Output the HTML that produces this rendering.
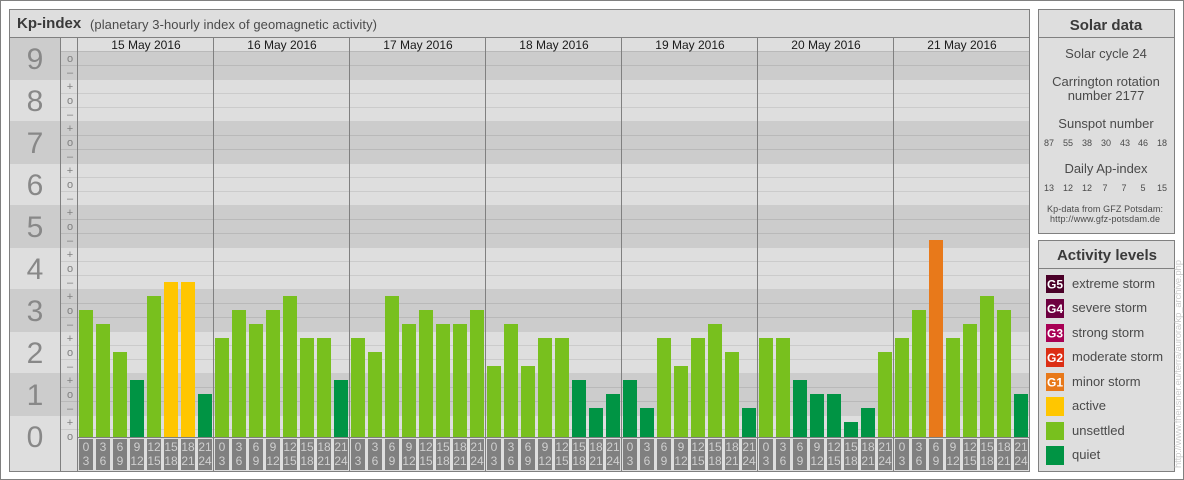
<!DOCTYPE html>
<html lang="en">
<head>
<meta charset="utf-8">
<title>Kp-index</title>
<style>
html,body{margin:0;padding:0;background:#fff}
svg{display:block;font-family:"Liberation Sans",Arial,sans-serif}
text{text-anchor:middle}
.s{text-anchor:start}
.k{font-size:30px;fill:#888888}
.m{font-size:11px;fill:#808080}
.d{font-size:12px;fill:#1a1a1a}
.c{font-size:12px;fill:#cfcfcf}
.t{font-size:13px;fill:#4a4a4a}
.n{font-size:9px;fill:#4a4a4a}
.h{font-size:15px;font-weight:bold;fill:#3a3a3a}
.g{font-size:12px;font-weight:bold;fill:#fff}
</style>
</head>
<body>
<svg xmlns="http://www.w3.org/2000/svg" width="1184" height="480" viewBox="0 0 1184 480">
<g shape-rendering="crispEdges">
<rect x="0.5" y="0.5" width="1183" height="479" fill="#fff" stroke="#808080"/>
<rect x="9.5" y="9.5" width="1020" height="462" fill="#dedede" stroke="#808080"/>
<rect x="1038.5" y="9.5" width="136" height="224" fill="#dedede" stroke="#808080"/>
<rect x="1038.5" y="240.5" width="136" height="231" fill="#dedede" stroke="#808080"/>
<path fill="#808080" d="M10 37h1019v1H10zM1039 37h135v1h-135zM1039 268h135v1h-135z"/>
<path fill="#cccccc" d="M10 38h50v42H10zM60 52h969v28H60zM10 121h1019v43H10zM10 205h1019v43H10zM10 289h1019v43H10zM10 373h1019v43H10z"/>
<path fill="#b9b9b9" d="M61 51h968v1H61zM61 65h968v1H61zM61 135h968v1H61zM61 149h968v1H61zM61 219h968v1H61zM61 233h968v1H61zM61 303h968v1H61zM61 317h968v1H61zM61 387h968v1H61zM61 401h968v1H61z"/>
<path fill="#cbcbcb" d="M61 93h968v1H61zM61 107h968v1H61zM61 177h968v1H61zM61 191h968v1H61zM61 261h968v1H61zM61 275h968v1H61zM61 345h968v1H61zM61 359h968v1H61zM61 429h968v1H61z"/>
<rect x="78" y="438" width="951" height="33" fill="#dedede"/>
<path fill="#808080" d="M60 38h1v433h-1zM77 38h1v433h-1zM213 38h1v433h-1zM349 38h1v433h-1zM485 38h1v433h-1zM621 38h1v433h-1zM757 38h1v433h-1zM893 38h1v433h-1zM78 437h951v1H78z"/>
<path fill="#78c01e" d="M79 310h14v127H79zM96 324h14v113H96zM113 352h14v85h-14zM147 296h14v141h-14zM215 338h14v99h-14zM232 310h14v127h-14zM249 324h14v113h-14zM266 310h14v127h-14zM283 296h14v141h-14zM300 338h14v99h-14zM317 338h14v99h-14zM351 338h14v99h-14zM368 352h14v85h-14zM385 296h14v141h-14zM402 324h14v113h-14zM419 310h14v127h-14zM436 324h14v113h-14zM453 324h14v113h-14zM470 310h14v127h-14zM487 366h14v71h-14zM504 324h14v113h-14zM521 366h14v71h-14zM538 338h14v99h-14zM555 338h14v99h-14zM657 338h14v99h-14zM674 366h14v71h-14zM691 338h14v99h-14zM708 324h14v113h-14zM725 352h14v85h-14zM759 338h14v99h-14zM776 338h14v99h-14zM878 352h14v85h-14zM895 338h14v99h-14zM912 310h14v127h-14zM946 338h14v99h-14zM963 324h14v113h-14zM980 296h14v141h-14zM997 310h14v127h-14z"/>
<path fill="#009444" d="M130 380h14v57h-14zM198 394h14v43h-14zM334 380h14v57h-14zM572 380h14v57h-14zM589 408h14v29h-14zM606 394h14v43h-14zM623 380h14v57h-14zM640 408h14v29h-14zM742 408h14v29h-14zM793 380h14v57h-14zM810 394h14v43h-14zM827 394h14v43h-14zM844 422h14v15h-14zM861 408h14v29h-14zM1014 394h14v43h-14z"/>
<path fill="#ffc600" d="M164 282h14v155h-14zM181 282h14v155h-14z"/>
<path fill="#e8791a" d="M929 240h14v197h-14z"/>
<path fill="#808080" d="M79 439h14v31H79zM96 439h14v31H96zM113 439h14v31h-14zM130 439h14v31h-14zM147 439h14v31h-14zM164 439h14v31h-14zM181 439h14v31h-14zM198 439h14v31h-14zM215 439h14v31h-14zM232 439h14v31h-14zM249 439h14v31h-14zM266 439h14v31h-14zM283 439h14v31h-14zM300 439h14v31h-14zM317 439h14v31h-14zM334 439h14v31h-14zM351 439h14v31h-14zM368 439h14v31h-14zM385 439h14v31h-14zM402 439h14v31h-14zM419 439h14v31h-14zM436 439h14v31h-14zM453 439h14v31h-14zM470 439h14v31h-14zM487 439h14v31h-14zM504 439h14v31h-14zM521 439h14v31h-14zM538 439h14v31h-14zM555 439h14v31h-14zM572 439h14v31h-14zM589 439h14v31h-14zM606 439h14v31h-14zM623 439h14v31h-14zM640 439h14v31h-14zM657 439h14v31h-14zM674 439h14v31h-14zM691 439h14v31h-14zM708 439h14v31h-14zM725 439h14v31h-14zM742 439h14v31h-14zM759 439h14v31h-14zM776 439h14v31h-14zM793 439h14v31h-14zM810 439h14v31h-14zM827 439h14v31h-14zM844 439h14v31h-14zM861 439h14v31h-14zM878 439h14v31h-14zM895 439h14v31h-14zM912 439h14v31h-14zM929 439h14v31h-14zM946 439h14v31h-14zM963 439h14v31h-14zM980 439h14v31h-14zM997 439h14v31h-14zM1014 439h14v31h-14z"/>
<rect x="1046" y="275" width="18" height="18" fill="#4a0028"/>
<rect x="1046" y="299" width="18" height="19" fill="#6e0040"/>
<rect x="1046" y="324" width="18" height="18" fill="#a80054"/>
<rect x="1046" y="348" width="18" height="19" fill="#dc2e14"/>
<rect x="1046" y="373" width="18" height="18" fill="#e8791a"/>
<rect x="1046" y="397" width="18" height="19" fill="#ffc600"/>
<rect x="1046" y="422" width="18" height="18" fill="#78c01e"/>
<rect x="1046" y="446" width="18" height="19" fill="#009444"/>
</g>

<text class="h s" x="17" y="28">Kp-index</text>
<text class="t s" x="90" y="29" textLength="287">(planetary 3-hourly index of geomagnetic activity)</text>

<text class="k" x="35" y="69">9</text>
<text class="k" x="35" y="111">8</text>
<text class="k" x="35" y="153">7</text>
<text class="k" x="35" y="195">6</text>
<text class="k" x="35" y="237">5</text>
<text class="k" x="35" y="279">4</text>
<text class="k" x="35" y="321">3</text>
<text class="k" x="35" y="363">2</text>
<text class="k" x="35" y="405">1</text>
<text class="k" x="35" y="447">0</text>

<g class="m">
<text class="m" x="70" y="62">o</text><text class="m" x="70" y="76">–</text>
<text class="m" x="70" y="90">+</text><text class="m" x="70" y="104">o</text><text class="m" x="70" y="118">–</text>
<text class="m" x="70" y="132">+</text><text class="m" x="70" y="146">o</text><text class="m" x="70" y="160">–</text>
<text class="m" x="70" y="174">+</text><text class="m" x="70" y="188">o</text><text class="m" x="70" y="202">–</text>
<text class="m" x="70" y="216">+</text><text class="m" x="70" y="230">o</text><text class="m" x="70" y="244">–</text>
<text class="m" x="70" y="258">+</text><text class="m" x="70" y="272">o</text><text class="m" x="70" y="286">–</text>
<text class="m" x="70" y="300">+</text><text class="m" x="70" y="314">o</text><text class="m" x="70" y="328">–</text>
<text class="m" x="70" y="342">+</text><text class="m" x="70" y="356">o</text><text class="m" x="70" y="370">–</text>
<text class="m" x="70" y="384">+</text><text class="m" x="70" y="398">o</text><text class="m" x="70" y="412">–</text>
<text class="m" x="70" y="426">+</text><text class="m" x="70" y="440">o</text>
</g>

<text class="d" x="146" y="49">15 May 2016</text>
<text class="d" x="282" y="49">16 May 2016</text>
<text class="d" x="418" y="49">17 May 2016</text>
<text class="d" x="554" y="49">18 May 2016</text>
<text class="d" x="690" y="49">19 May 2016</text>
<text class="d" x="826" y="49">20 May 2016</text>
<text class="d" x="962" y="49">21 May 2016</text>

<text class="c" y="451"><tspan x="86">0</tspan><tspan x="103">3</tspan><tspan x="120">6</tspan><tspan x="137">9</tspan><tspan x="154">12</tspan><tspan x="171">15</tspan><tspan x="188">18</tspan><tspan x="205">21</tspan><tspan x="222">0</tspan><tspan x="239">3</tspan><tspan x="256">6</tspan><tspan x="273">9</tspan><tspan x="290">12</tspan><tspan x="307">15</tspan><tspan x="324">18</tspan><tspan x="341">21</tspan><tspan x="358">0</tspan><tspan x="375">3</tspan><tspan x="392">6</tspan><tspan x="409">9</tspan><tspan x="426">12</tspan><tspan x="443">15</tspan><tspan x="460">18</tspan><tspan x="477">21</tspan><tspan x="494">0</tspan><tspan x="511">3</tspan><tspan x="528">6</tspan><tspan x="545">9</tspan><tspan x="562">12</tspan><tspan x="579">15</tspan><tspan x="596">18</tspan><tspan x="613">21</tspan><tspan x="630">0</tspan><tspan x="647">3</tspan><tspan x="664">6</tspan><tspan x="681">9</tspan><tspan x="698">12</tspan><tspan x="715">15</tspan><tspan x="732">18</tspan><tspan x="749">21</tspan><tspan x="766">0</tspan><tspan x="783">3</tspan><tspan x="800">6</tspan><tspan x="817">9</tspan><tspan x="834">12</tspan><tspan x="851">15</tspan><tspan x="868">18</tspan><tspan x="885">21</tspan><tspan x="902">0</tspan><tspan x="919">3</tspan><tspan x="936">6</tspan><tspan x="953">9</tspan><tspan x="970">12</tspan><tspan x="987">15</tspan><tspan x="1004">18</tspan><tspan x="1021">21</tspan></text>
<text class="c" y="465"><tspan x="86">3</tspan><tspan x="103">6</tspan><tspan x="120">9</tspan><tspan x="137">12</tspan><tspan x="154">15</tspan><tspan x="171">18</tspan><tspan x="188">21</tspan><tspan x="205">24</tspan><tspan x="222">3</tspan><tspan x="239">6</tspan><tspan x="256">9</tspan><tspan x="273">12</tspan><tspan x="290">15</tspan><tspan x="307">18</tspan><tspan x="324">21</tspan><tspan x="341">24</tspan><tspan x="358">3</tspan><tspan x="375">6</tspan><tspan x="392">9</tspan><tspan x="409">12</tspan><tspan x="426">15</tspan><tspan x="443">18</tspan><tspan x="460">21</tspan><tspan x="477">24</tspan><tspan x="494">3</tspan><tspan x="511">6</tspan><tspan x="528">9</tspan><tspan x="545">12</tspan><tspan x="562">15</tspan><tspan x="579">18</tspan><tspan x="596">21</tspan><tspan x="613">24</tspan><tspan x="630">3</tspan><tspan x="647">6</tspan><tspan x="664">9</tspan><tspan x="681">12</tspan><tspan x="698">15</tspan><tspan x="715">18</tspan><tspan x="732">21</tspan><tspan x="749">24</tspan><tspan x="766">3</tspan><tspan x="783">6</tspan><tspan x="800">9</tspan><tspan x="817">12</tspan><tspan x="834">15</tspan><tspan x="851">18</tspan><tspan x="868">21</tspan><tspan x="885">24</tspan><tspan x="902">3</tspan><tspan x="919">6</tspan><tspan x="936">9</tspan><tspan x="953">12</tspan><tspan x="970">15</tspan><tspan x="987">18</tspan><tspan x="1004">21</tspan><tspan x="1021">24</tspan></text>

<text class="h" x="1106" y="30">Solar data</text>
<text class="t" x="1106" y="58">Solar cycle 24</text>
<text class="t" x="1106" y="86">Carrington rotation</text>
<text class="t" x="1106" y="100">number 2177</text>
<text class="t" x="1106" y="128">Sunspot number</text>
<text class="n" y="146"><tspan x="1049">87</tspan><tspan x="1068">55</tspan><tspan x="1087">38</tspan><tspan x="1106">30</tspan><tspan x="1125">43</tspan><tspan x="1143">46</tspan><tspan x="1162">18</tspan></text>
<text class="t" x="1106" y="173">Daily Ap-index</text>
<text class="n" y="191"><tspan x="1049">13</tspan><tspan x="1068">12</tspan><tspan x="1087">12</tspan><tspan x="1105">7</tspan><tspan x="1124">7</tspan><tspan x="1143">5</tspan><tspan x="1162">15</tspan></text>
<text class="n s" x="1047" y="212" textLength="116">Kp-data from GFZ Potsdam:</text>
<text class="n s" x="1050" y="222" textLength="110">http://www.gfz-potsdam.de</text>

<text class="h" x="1107" y="260">Activity levels</text>
<text class="g" x="1055" y="288.500">G5</text>
<text class="g" x="1055" y="313">G4</text>
<text class="g" x="1055" y="337.500">G3</text>
<text class="g" x="1055" y="362">G2</text>
<text class="g" x="1055" y="386.500">G1</text>
<text class="t s" x="1072" y="288">extreme storm</text>
<text class="t s" x="1072" y="312">severe storm</text>
<text class="t s" x="1072" y="337">strong storm</text>
<text class="t s" x="1072" y="361">moderate storm</text>
<text class="t s" x="1072" y="386">minor storm</text>
<text class="t s" x="1072" y="410">active</text>
<text class="t s" x="1072" y="435">unsettled</text>
<text class="t s" x="1072" y="459">quiet</text>

<text x="0" y="0" transform="translate(1181 468) rotate(-90)" textLength="208" style="text-anchor:start;font-size:9.500px;fill:#cccccc">http://www.fheusner.eu/terra/aurora/kp_archive.php</text>
</svg>
</body>
</html>
